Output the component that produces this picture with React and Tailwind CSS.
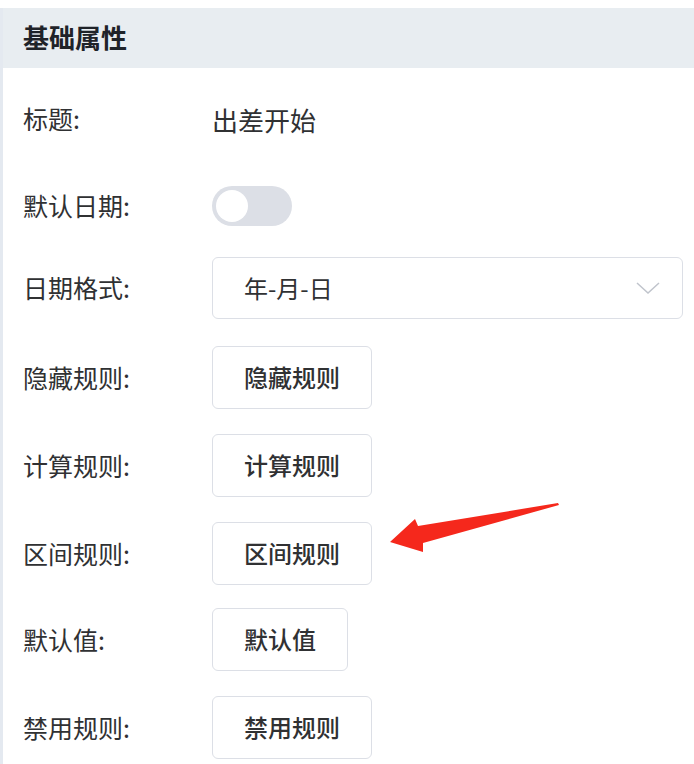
import React from 'react';

const font = { fontFamily: '"Noto Sans CJK SC", "Noto Sans", sans-serif' };

function Label({ children }) {
  return <div className="w-[209px] shrink-0 pl-[20px] text-[25px] text-[#303133]">{children}</div>;
}

function RuleButton({ children }) {
  return (
    <button className="h-[63px] px-[31px] pb-[2px] border border-[#dcdfe6] rounded-[6px] bg-white text-[24px] font-medium text-[#303133]">
      {children}
    </button>
  );
}

export default function App() {
  const rules = [
    { label: '隐藏规则:', text: '隐藏规则', mt: 'mt-[27px]' },
    { label: '计算规则:', text: '计算规则', mt: 'mt-[25px]' },
    { label: '区间规则:', text: '区间规则', mt: 'mt-[25px]' },
    { label: '默认值:', text: '默认值', mt: 'mt-[23px]' },
    { label: '禁用规则:', text: '禁用规则', mt: 'mt-[25px]' },
  ];

  return (
    <div className="relative w-[694px] h-[764px] overflow-hidden bg-white pt-[8px]" style={font}>
      <div className="border-l-[3px] border-[#e4e9f0] h-full">
        <div className="h-[60px] bg-[#e8edf1] flex items-center px-[20px] pb-[4px]">
          <span className="text-[26px] font-bold text-[#1f2329]">基础属性</span>
        </div>

        <div className="flex items-center h-[40px] mt-[31px]">
          <Label>标题:</Label>
          <span className="text-[26px] text-[#303133]">出差开始</span>
        </div>

        <div className="flex items-center h-[40px] mt-[47px]">
          <Label>默认日期:</Label>
          <div className="w-[80px] h-[40px] rounded-full bg-[#dcdfe6] flex items-center px-[4px]">
            <div className="w-[32px] h-[32px] rounded-full bg-white" />
          </div>
        </div>

        <div className="flex items-center h-[62px] mt-[31px]">
          <Label>日期格式:</Label>
          <div className="flex-1 mr-[11px] h-[62px] border border-[#dcdfe6] rounded-[6px] flex items-center justify-between pl-[31px] pr-[22px]">
            <span className="text-[24px] text-[#303133]">年-月-日</span>
            <svg width="24" height="12" viewBox="0 0 24 12" fill="none">
              <path d="M1 1 L12 11 L23 1" stroke="#c0c4cc" strokeWidth="1.5" />
            </svg>
          </div>
        </div>

        {rules.map((r) => (
          <div key={r.text} className={`flex items-center h-[63px] ${r.mt}`}>
            <Label>{r.label}</Label>
            <RuleButton>{r.text}</RuleButton>
          </div>
        ))}
      </div>

      <svg className="absolute left-0 top-0 pointer-events-none" width="694" height="764" viewBox="0 0 694 764">
        <polygon
          points="390,542 415,519 418,526 558,503 559,505 423,543 423,552"
          fill="#f5281c"
        />
      </svg>
    </div>
  );
}
